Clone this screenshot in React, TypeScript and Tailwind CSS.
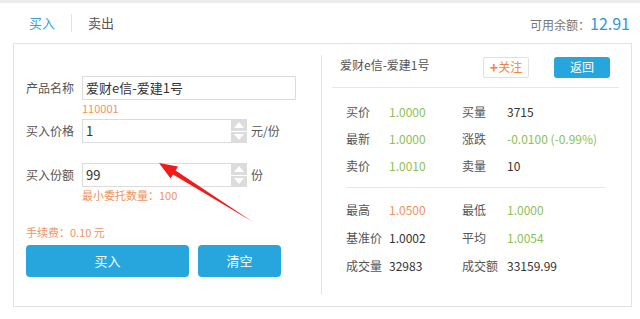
import React from "react";

const Spinner = () => (
  <div className="flex h-full w-[16px] flex-col bg-[#dcdcdc]">
    <div className="flex flex-1 items-center justify-center border-b border-white">
      <svg width="10" height="6" viewBox="0 0 10 6"><polygon points="5,0 10,6 0,6" fill="#fff" /></svg>
    </div>
    <div className="flex flex-1 items-center justify-center">
      <svg width="10" height="6" viewBox="0 0 10 6"><polygon points="0,0 10,0 5,6" fill="#fff" /></svg>
    </div>
  </div>
);

const Row = ({ a, av, ac, b, bv, bc, h }: { a: string; av: string; ac: string; b: string; bv: string; bc: string; h: string }) => (
  <div className={`flex items-center text-[12px] ${h}`}>
    <div className="w-[43px] text-[#555]">{a}</div>
    <div className={`w-[73px] ${ac}`}>{av}</div>
    <div className="w-[45px] text-[#555]">{b}</div>
    <div className={bc}>{bv}</div>
  </div>
);

export default function App() {
  return (
    <div
      className="relative h-[319px] w-[640px] overflow-hidden bg-white text-[#333]"
      style={{ fontFamily: '"Noto Sans CJK SC", "Noto Sans", sans-serif' }}
    >
      <div className="h-[3px] bg-[#ececec]" />
      <div className="flex h-[40px] items-center pl-[29px] pr-[10px]">
        <span className="text-[13px] text-[#3a9fd8]">买入</span>
        <span className="mx-[16px] h-[18px] w-px bg-[#e3e3e3]" />
        <span className="text-[13px] text-[#555]">卖出</span>
        <div className="ml-auto flex items-baseline">
          <span className="text-[12px] text-[#777]">可用余额：</span>
          <span className="text-[16px] text-[#2f9ad6]">12.91</span>
        </div>
      </div>

      <div className="ml-[13px] flex h-[264px] w-[619px] border border-[#e2e2e2]">
        {/* left */}
        <div className="w-[307px] px-[12px] pt-[32px]">
          <div className="flex h-[24px] items-center">
            <div className="w-[56px] text-[12px] text-[#555]">产品名称</div>
            <div className="flex h-full w-[214px] items-center border border-[#dcdcdc] pl-[3px] text-[13px] text-[#333]">爱财e信-爱建1号</div>
          </div>
          <div className="h-[16px] pl-[56px] text-[11px] leading-[16px] text-[#f0945e]">110001</div>
          <div className="mt-[3px] flex h-[24px] items-center">
            <div className="w-[56px] text-[12px] text-[#555]">买入价格</div>
            <div className="flex h-full w-[149px] items-center border border-r-0 border-[#dcdcdc] pl-[3px] text-[13px]">1</div>
            <Spinner />
            <span className="ml-[4px] text-[12px] text-[#555]">元/份</span>
          </div>
          <div className="mt-[20px] flex h-[24px] items-center">
            <div className="w-[56px] text-[12px] text-[#555]">买入份额</div>
            <div className="flex h-full w-[149px] items-center border border-r-0 border-[#dcdcdc] pl-[3px] text-[13px]">99</div>
            <Spinner />
            <span className="ml-[4px] text-[12px] text-[#555]">份</span>
          </div>
          <div className="h-[16px] pl-[56px] text-[11px] leading-[16px] text-[#f0945e]">最小委托数量：100</div>
          <div className="mt-[21px] h-[16px] text-[11px] leading-[16px] text-[#f0945e]">手续费：0.10 元</div>
          <div className="mt-[5px] flex gap-[9px]">
            <button className="h-[32px] w-[163px] rounded-[4px] bg-[#27a6de] text-[13px] text-white">买入</button>
            <button className="h-[32px] w-[83px] rounded-[4px] bg-[#27a6de] text-[13px] text-white">清空</button>
          </div>
        </div>

        {/* right */}
        <div className="mb-[12px] mt-[11px] flex-1 border-l border-[#e2e2e2]">
          <div className="mt-[1px] flex h-[22px] items-center pl-[18px]">
            <span className="-mt-[4px] w-[143px] whitespace-nowrap text-[12px] text-[#555]">爱财e信-爱建1号</span>
            <button className="flex h-[21px] w-[46px] items-center justify-center rounded-[2px] border border-[#e0e0e0] text-[12px] text-[#f0873a]">
              <span className="text-[14px] leading-none font-bold">+</span>关注
            </button>
            <button className="ml-[25px] h-[21px] w-[56px] rounded-[3px] bg-[#27a6de] text-[12px] text-white">返回</button>
          </div>
          <div className="ml-[10px] mr-[12px] mt-[9px] h-px bg-[#e8e8e8]" />
          <div className="mt-[10px] pl-[24px]">
            <Row h="h-[27px]" a="买价" av="1.0000" ac="text-[#8cc152]" b="买量" bv="3715" bc="text-[#333]" />
            <Row h="h-[27px]" a="最新" av="1.0000" ac="text-[#8cc152]" b="涨跌" bv="-0.0100 (-0.99%)" bc="text-[#8cc152]" />
            <Row h="h-[27px]" a="卖价" av="1.0010" ac="text-[#8cc152]" b="卖量" bv="10" bc="text-[#333]" />
          </div>
          <div className="ml-[24px] mr-[26px] mt-[8px] h-px bg-[#e8e8e8]" />
          <div className="mt-[8px] pl-[24px]">
            <Row h="h-[28px]" a="最高" av="1.0500" ac="text-[#f0945e]" b="最低" bv="1.0000" bc="text-[#8cc152]" />
            <Row h="h-[28px]" a="基准价" av="1.0002" ac="text-[#333]" b="平均" bv="1.0054" bc="text-[#8cc152]" />
            <Row h="h-[28px]" a="成交量" av="32983" ac="text-[#333]" b="成交额" bv="33159.99" bc="text-[#333]" />
          </div>
        </div>
      </div>

      <svg className="pointer-events-none absolute left-0 top-0" width="640" height="319" viewBox="0 0 640 319">
        <polygon
          points="159,163 178,166.5 175.6,170.4 253,222 173,174.6 170.6,178.5"
          fill="#f01c1c"
        />
      </svg>
    </div>
  );
}
